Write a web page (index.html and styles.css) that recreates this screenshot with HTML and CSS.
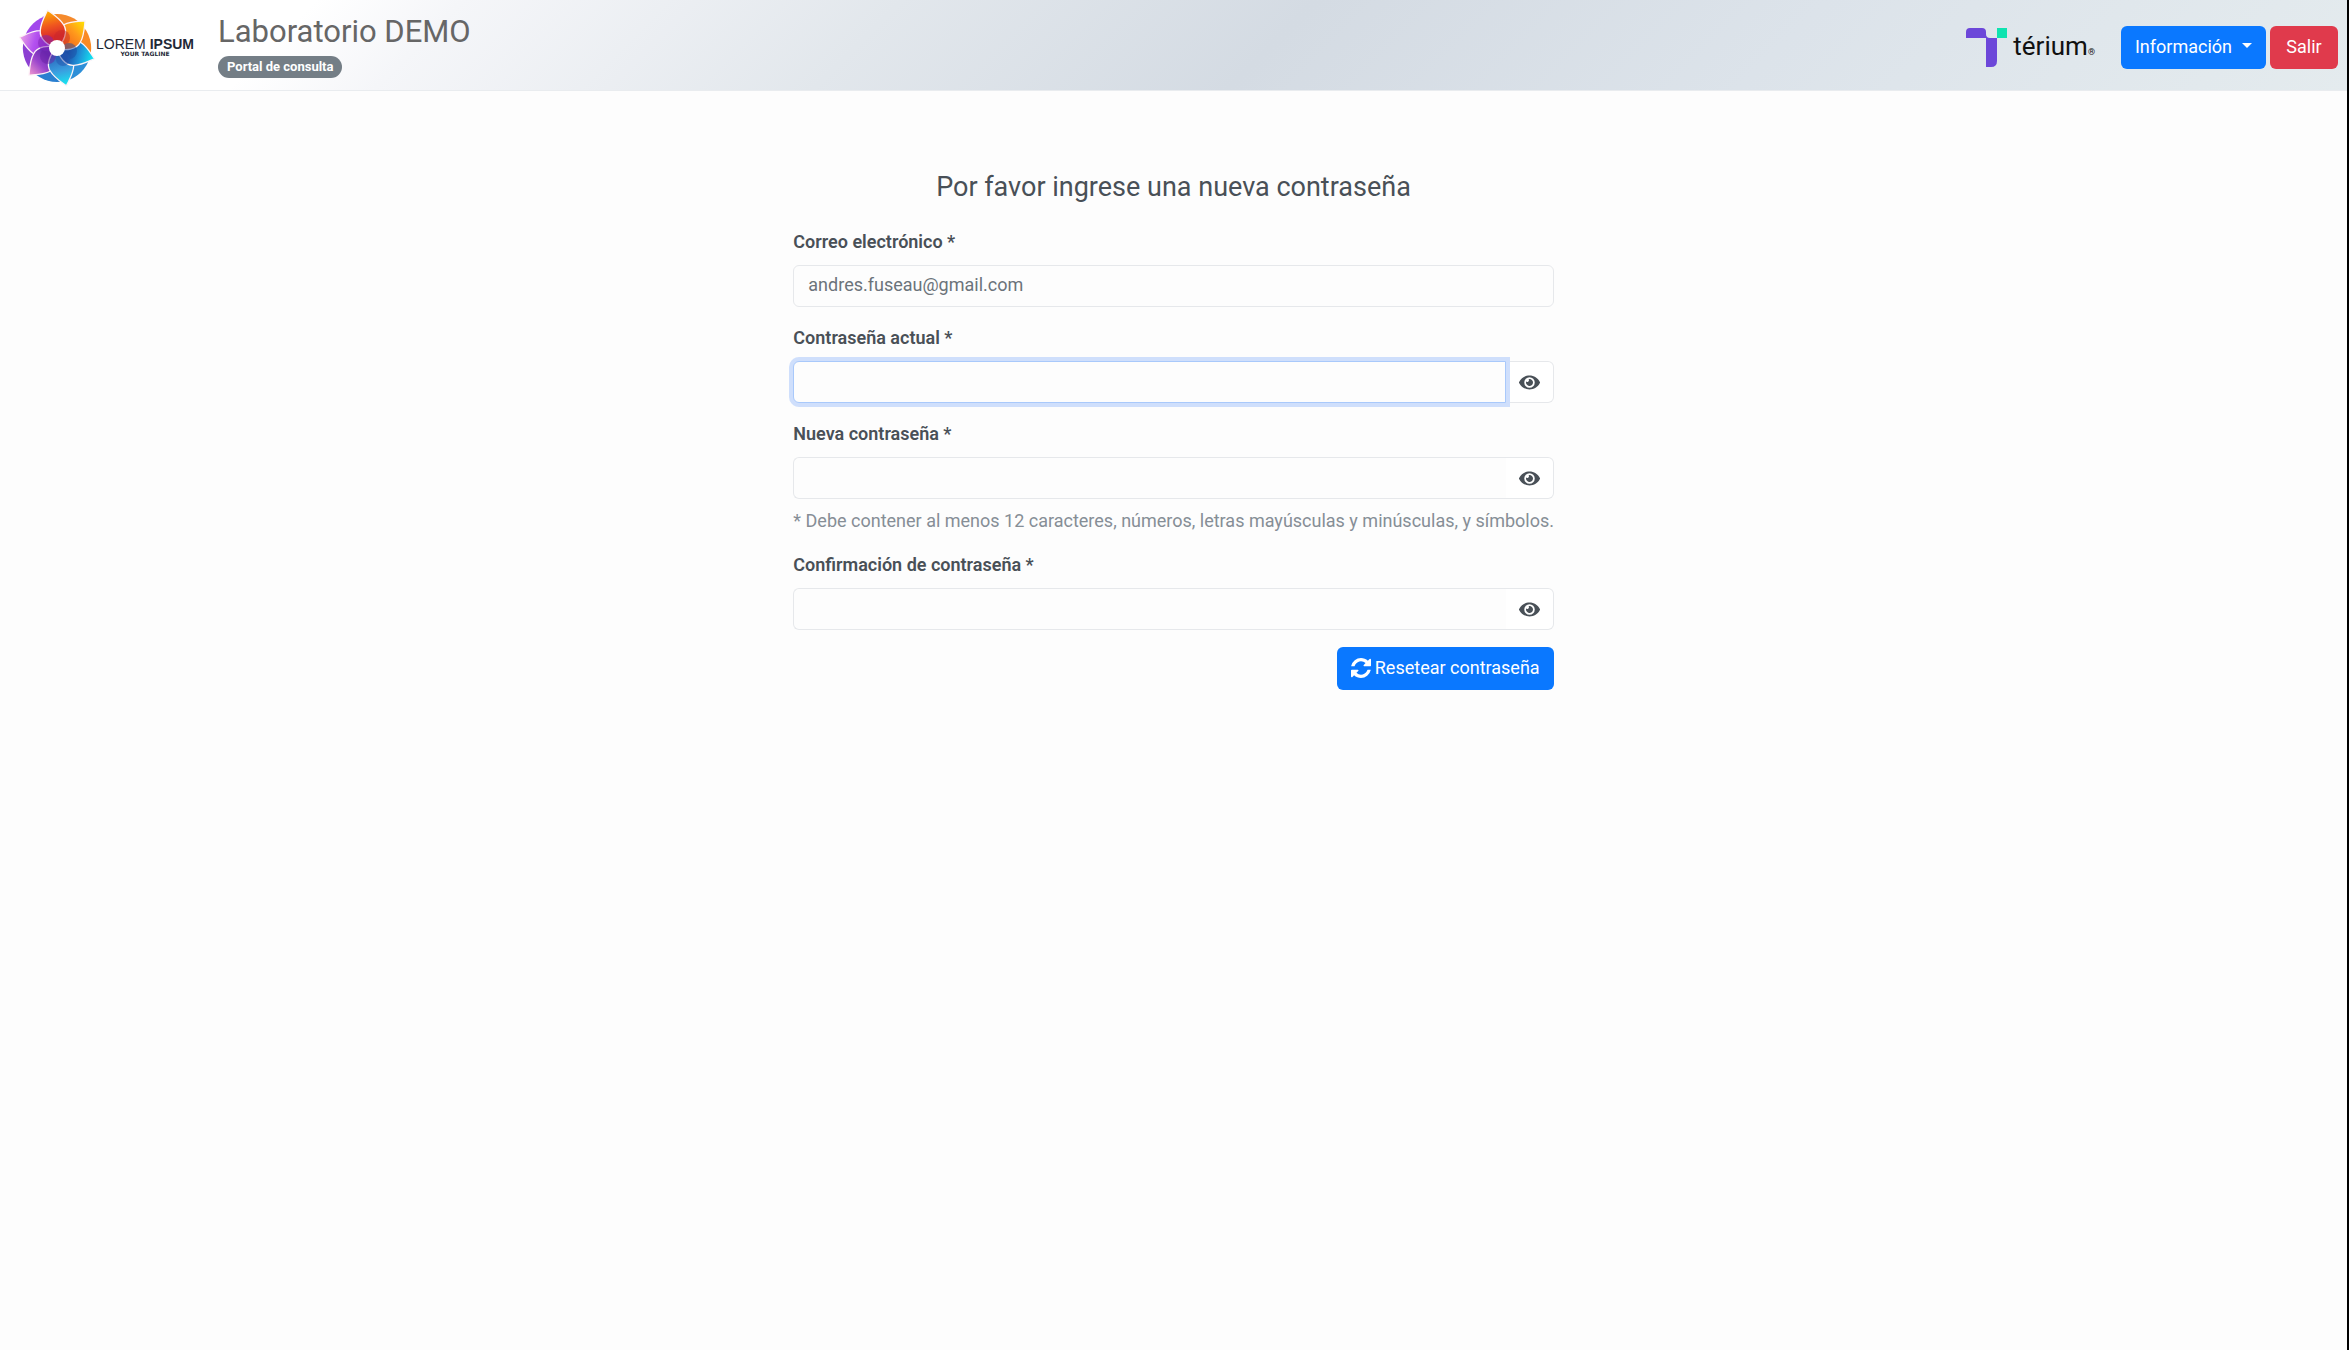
FILE: index.html
```html
<!DOCTYPE html>
<html lang="es">
<head>
    <meta charset="UTF-8">
    <meta name="viewport" content="width=device-width, initial-scale=1">
    <title>Laboratorio DEMO</title>
    <link rel="stylesheet" href="styles.css">
</head>
<body>
    <svg class="sprite" aria-hidden="true">
        <symbol id="eye" viewBox="0 0 576 512">
            <path d="M572.52 241.4C518.29 135.59 410.93 64 288 64S57.68 135.64 3.48 241.41a32.35 32.35 0 0 0 0 29.19C57.71 376.41 165.07 448 288 448s230.32-71.64 284.52-177.41a32.35 32.35 0 0 0 0-29.19zM288 400a144 144 0 1 1 144-144 143.93 143.93 0 0 1-144 144zm0-240a95.31 95.31 0 0 0-25.31 3.79 47.85 47.85 0 0 1-66.9 66.9A95.78 95.78 0 1 0 288 160z"/>
        </symbol>
    </svg>

    <header class="navbar">
        <div class="brand-logo">
            <svg class="flower" viewBox="-37 -37 74 74" aria-hidden="true">
                <defs>
                    <linearGradient id="g-red" x1="0" y1="1" x2="0" y2="0"><stop offset="0.3" stop-color="#d8282c"/><stop offset="0.6" stop-color="#f0581e"/><stop offset="1" stop-color="#ffb400"/></linearGradient>
                    <linearGradient id="g-yellow" x1="0" y1="1" x2="0" y2="0"><stop offset="0.2" stop-color="#f4661b"/><stop offset="0.6" stop-color="#ff9a1c"/><stop offset="1" stop-color="#ffe600"/></linearGradient>
                    <linearGradient id="g-blue" x1="0" y1="1" x2="0" y2="0"><stop offset="0.3" stop-color="#1c4fa8"/><stop offset="0.6" stop-color="#1f8fd6"/><stop offset="1" stop-color="#12f0f5"/></linearGradient>
                    <linearGradient id="g-cyan" x1="0" y1="1" x2="0" y2="0"><stop offset="0.2" stop-color="#2c69bd"/><stop offset="0.6" stop-color="#3a9fe0"/><stop offset="1" stop-color="#14ecf2"/></linearGradient>
                    <linearGradient id="g-purple" x1="0" y1="1" x2="0" y2="0"><stop offset="0.3" stop-color="#6a2bb4"/><stop offset="0.6" stop-color="#9a45cc"/><stop offset="1" stop-color="#f29ad0"/></linearGradient>
                    <linearGradient id="g-violet" x1="0" y1="1" x2="0" y2="0"><stop offset="0.2" stop-color="#9a30d0"/><stop offset="0.6" stop-color="#b452f0"/><stop offset="1" stop-color="#eca4e4"/></linearGradient>
                </defs>
                <g>
                    <path fill="#f58a2c" d="M0 0L-8 -33A34 34 0 0 1 24 -24Z"/>
                    <path fill="#f98a25" d="M0 0L24 -24A34 34 0 0 1 33 9Z"/>
                    <path fill="#2d8fd8" d="M0 0L33 9A34 34 0 0 1 8 33Z"/>
                    <path fill="#2a7fd0" d="M0 0L8 33A34 34 0 0 1 -24 24Z"/>
                    <path fill="#8c3fd2" d="M0 0L-24 24A34 34 0 0 1 -33 -9Z"/>
                    <path fill="#a248ec" d="M0 0L-33 -9A34 34 0 0 1 -8 -33Z"/>
                </g>
                <g class="petals">
                    <path fill="url(#g-violet)" transform="rotate(-74)" d="M0 0C-8 -4 -15 -13 -12 -21C-10 -28 -5 -33 0 -39C5 -33 10 -28 12 -21C15 -13 8 -4 0 0Z"/>
                    <path fill="url(#g-purple)" transform="rotate(-134)" d="M0 0C-8 -4 -15 -13 -12 -21C-10 -28 -5 -33 0 -39C5 -33 10 -28 12 -21C15 -13 8 -4 0 0Z"/>
                    <path fill="url(#g-cyan)" transform="rotate(166)" d="M0 0C-8 -4 -15 -13 -12 -21C-10 -28 -5 -33 0 -39C5 -33 10 -28 12 -21C15 -13 8 -4 0 0Z"/>
                    <path fill="url(#g-blue)" transform="rotate(106)" d="M0 0C-8 -4 -15 -13 -12 -21C-10 -28 -5 -33 0 -39C5 -33 10 -28 12 -21C15 -13 8 -4 0 0Z"/>
                    <path fill="url(#g-yellow)" transform="rotate(46)" d="M0 0C-8 -4 -15 -13 -12 -21C-10 -28 -5 -33 0 -39C5 -33 10 -28 12 -21C15 -13 8 -4 0 0Z"/>
                    <path fill="url(#g-red)" transform="rotate(-14)" d="M0 0C-8 -4 -15 -13 -12 -21C-10 -28 -5 -33 0 -39C5 -33 10 -28 12 -21C15 -13 8 -4 0 0Z"/>
                </g>
                <g class="overlaps">
                    <circle fill="#c92a2a" cx="5" cy="-10" r="8"/>
                    <circle fill="#1d4fa6" cx="12" cy="3" r="8"/>
                    <circle fill="#2455ae" cx="6" cy="11" r="7"/>
                    <circle fill="#6c22a8" cx="-9" cy="8" r="8"/>
                    <circle fill="#7f25b8" cx="-11" cy="-5" r="8"/>
                </g>
                <circle r="8" fill="#fff"/>
            </svg>
            <div class="logo-text">
                <div class="logo-name">LOREM <b>IPSUM</b></div>
                <div class="logo-tagline">YOUR TAGLINE</div>
            </div>
        </div>
        <div class="brand-title">
            <h1>Laboratorio DEMO</h1>
            <span class="badge">Portal de consulta</span>
        </div>
        <div class="navbar-right">
            <div class="terium">
                <svg class="terium-mark" viewBox="0 0 41 39" aria-hidden="true">
                    <path fill="#6c47d9" d="M0 10V4Q0 0 4 0H16Q20 0 20 4V6Q20 10 24 10H31V33Q31 39 25 39H20V10Z"/>
                    <path fill="#0ee3b0" d="M31 0H41V10H31Z"/>
                </svg>
                <span class="terium-name">térium<small>®</small></span>
            </div>
            <div class="navbar-buttons">
                <button type="button" class="btn btn-primary dropdown-toggle">Información</button>
                <button type="button" class="btn btn-danger">Salir</button>
            </div>
        </div>
    </header>

    <main class="container">
        <form class="reset-form">
            <h2>Por favor ingrese una nueva contraseña</h2>
            <div class="form-group">
                <label for="email">Correo electrónico *</label>
                <input type="email" id="email" class="form-control" value="andres.fuseau@gmail.com" readonly>
            </div>
            <div class="form-group">
                <label for="current-password">Contraseña actual *</label>
                <div class="input-group">
                    <input type="password" id="current-password" class="form-control active">
                    <button type="button" class="btn-eye" aria-label="Mostrar contraseña"><svg><use href="#eye"/></svg></button>
                </div>
            </div>
            <div class="form-group">
                <label for="new-password">Nueva contraseña *</label>
                <div class="input-group">
                    <input type="password" id="new-password" class="form-control">
                    <button type="button" class="btn-eye" aria-label="Mostrar contraseña"><svg><use href="#eye"/></svg></button>
                </div>
                <small class="form-text">* Debe contener al menos 12 caracteres, números, letras mayúsculas y minúsculas, y símbolos.</small>
            </div>
            <div class="form-group">
                <label for="confirm-password">Confirmación de contraseña *</label>
                <div class="input-group">
                    <input type="password" id="confirm-password" class="form-control">
                    <button type="button" class="btn-eye" aria-label="Mostrar contraseña"><svg><use href="#eye"/></svg></button>
                </div>
            </div>
            <div class="form-actions">
                <button type="submit" class="btn btn-primary">
                    <svg class="icon-refresh" viewBox="0 0 1536 1536" aria-hidden="true"><path d="M1511 928q0 5-1 7-64 268-268 434.5T764 1536q-146 0-282.5-55T238 1324l-129 129q-19 19-45 19t-45-19-19-45V960q0-26 19-45t45-19h448q26 0 45 19t19 45-19 45l-137 137q71 66 161 102t187 36q134 0 250-65t186-179q11-17 53-117 8-23 30-23h192q13 0 22.5 9.5t9.5 22.5zm25-800v448q0 26-19 45t-45 19h-448q-26 0-45-19t-19-45 19-45l138-138Q969 256 768 256q-134 0-250 65T332 500q-11 17-53 117-8 23-30 23H50q-13 0-22.5-9.5T18 608v-7q65-268 270-434.5T768 0q146 0 284 55.5T1297 212l130-129q19-19 45-19t45 19 19 45z"/></svg>
                    Resetear contraseña
                </button>
            </div>
        </form>
    </main>
</body>
</html>
```
FILE: styles.css
```css
* {
    box-sizing: border-box;
}
body {
    margin: 0;
    min-height: 100vh;
    border-right: 2px solid #000;
    font-family: Roboto, "Liberation Sans", sans-serif;
    font-size: 18px;
    line-height: 27px;
    color: #495057;
    background-color: #fdfdfd;
}
.sprite {
    display: none;
}

/* Header */
.navbar {
    display: flex;
    align-items: center;
    height: 91px;
    padding: 0 9px 0 20px;
    border-bottom: 1px solid #e9ecef;
    background: linear-gradient(135deg, #fff 13%, #f5f6f9 19%, #e2e7ec 37%, #d4dbe3 54%, #dce3ea 75%, #e4ebee 100%);
}
.brand-logo {
    display: flex;
    align-items: center;
    gap: 2px;
    width: 198px;
    padding-top: 6px;
}
.flower {
    width: 74px;
    height: 74px;
    overflow: visible;
}
.petals {
    stroke: #fdf3f7;
    stroke-width: 1.3;
}
.overlaps {
    opacity: 0.5;
}
.logo-text {
    font-family: "Liberation Sans", sans-serif;
    color: #1f2937;
    text-align: center;
    white-space: nowrap;
}
.logo-name {
    font-size: 14px;
    line-height: 12px;
}
.logo-tagline {
    font-family: "DejaVu Sans", sans-serif;
    font-size: 6px;
    font-weight: bold;
    line-height: 8px;
}
.brand-title {
    display: flex;
    flex-direction: column;
    align-items: flex-start;
    gap: 5px;
}
.brand-title h1 {
    margin: 0;
    font-size: 31px;
    font-weight: 400;
    line-height: 38px;
    color: #666;
}
.badge {
    padding: 0 9px;
    border-radius: 11px;
    font-size: 13px;
    font-weight: 700;
    line-height: 22px;
    color: #fff;
    background-color: #747e86;
}
.navbar-right {
    display: flex;
    align-items: center;
    gap: 26px;
    margin-left: auto;
    padding-top: 4px;
}
.terium {
    display: flex;
    align-items: center;
    gap: 6px;
}
.terium-mark {
    width: 41px;
    height: 39px;
}
.terium-name {
    padding-top: 4px;
    font-size: 26px;
    color: #111;
}
.terium-name small {
    font-size: 9px;
}
.navbar-buttons {
    display: flex;
    gap: 4px;
}

/* Buttons */
.btn {
    display: flex;
    align-items: center;
    justify-content: center;
    gap: 4px;
    height: 43px;
    padding: 0 14px 2px;
    border: none;
    border-radius: 6px;
    font-family: inherit;
    font-size: 18px;
    color: #fff;
    cursor: pointer;
}
.btn-primary {
    background-color: #0a78ff;
}
.btn-danger {
    min-width: 68px;
    background-color: #e03a4c;
}
.dropdown-toggle {
    gap: 10px;
}
.dropdown-toggle::after {
    content: "";
    margin-bottom: 2px;
    border-top: 5px solid;
    border-left: 5px solid transparent;
    border-right: 5px solid transparent;
}
.icon-refresh {
    width: 20px;
    height: 20px;
    fill: currentColor;
}

/* Form */
.container {
    display: flex;
    justify-content: center;
    padding-top: 77px;
}
.reset-form {
    width: 33.3333%;
    padding: 0 11px;
}
.reset-form h2 {
    margin: 0 0 22px;
    font-size: 27px;
    font-weight: 400;
    line-height: 38px;
    text-align: center;
}
.form-group {
    margin-bottom: 17px;
}
.form-group label {
    display: block;
    margin-bottom: 10px;
    font-weight: 600;
}
.form-control {
    display: block;
    width: 100%;
    height: 42px;
    padding: 0 14px 4px;
    border: 1px solid #e6e8eb;
    border-radius: 6px;
    font-family: inherit;
    font-size: 18px;
    color: #6b737a;
    background-color: #fdfdfd;
    outline: none;
}
.input-group {
    display: flex;
}
.input-group .form-control {
    flex: 1;
    border-right: none;
    border-radius: 6px 0 0 6px;
}
.form-control:focus,
.input-group .form-control.active {
    border: 1px solid #a9c9fb;
    box-shadow: 0 0 0 4px #cfdffc;
    z-index: 1;
}
.btn-eye {
    display: flex;
    align-items: center;
    justify-content: center;
    width: 48px;
    padding: 0;
    border: 1px solid #e6e8eb;
    border-left: none;
    border-radius: 0 6px 6px 0;
    color: #495057;
    background-color: #fff;
    cursor: pointer;
}
.btn-eye svg {
    width: 21px;
    height: 19px;
    fill: currentColor;
}
.form-text {
    display: block;
    margin-top: 8px;
    font-size: 18px;
    color: #868e96;
    white-space: nowrap;
}
.form-actions {
    display: flex;
    justify-content: flex-end;
}
```
